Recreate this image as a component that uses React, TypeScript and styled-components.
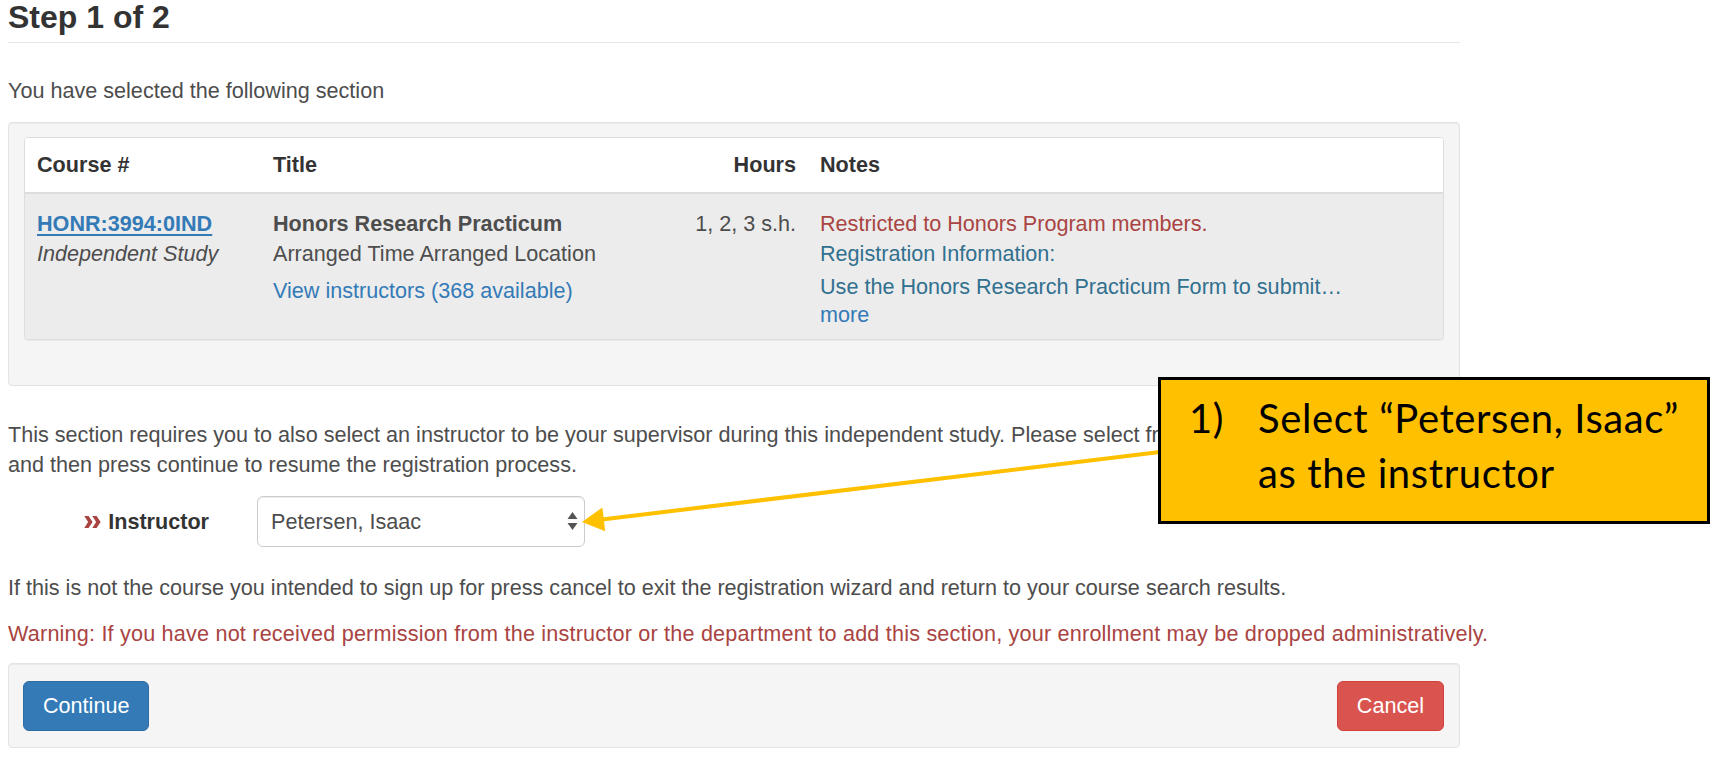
import * as React from 'react';
import styled, { createGlobalStyle } from 'styled-components';

const GlobalStyle = createGlobalStyle`
  html, body {
    margin: 0;
    padding: 0;
    background: #fff;
  }
  body {
    font-family: 'Liberation Sans', Arial, Helvetica, sans-serif;
    font-size: 21.6px;
    line-height: 30px;
    color: #4d4d4d;
  }
`;

const Page = styled.div`
  position: relative;
  width: 1452px;
  height: 757px;
  padding-left: 8px;
`;

const PageHeader = styled.h2`
  margin: 0;
  padding-bottom: 7px;
  font-size: 32px;
  line-height: 35px;
  font-weight: bold;
  color: #333;
  border-bottom: 1px solid #e6e6e6;
`;

const Text = styled.p<{ $top: number; $tone?: 'danger' }>`
  margin: ${({ $top }) => $top}px 0 0;
  color: ${({ $tone }) => ($tone === 'danger' ? '#a94442' : '#4d4d4d')};
  letter-spacing: ${({ $tone }) => ($tone === 'danger' ? '0.2px' : 'normal')};
  white-space: ${({ $tone }) => ($tone === 'danger' ? 'nowrap' : 'normal')};
`;

const Well = styled.div<{ $top: number }>`
  margin-top: ${({ $top }) => $top}px;
  background: #f5f5f5;
  border: 1px solid #e3e3e3;
  border-radius: 4px;
  box-shadow: inset 0 1px 1px rgba(0, 0, 0, 0.05);
`;

const SectionWell = styled(Well)`
  padding: 14px 15px 15px;
`;

const Panel = styled.div`
  margin-bottom: 30px;
  border: 1px solid #ddd;
  border-radius: 4px;
  overflow: hidden;
  box-shadow: 0 1px 1px rgba(0, 0, 0, 0.05);
`;

const Row = styled.div<{ $head?: boolean }>`
  display: grid;
  grid-template-columns: 236px 422px 125px 1fr;
  background: ${({ $head }) => ($head ? '#fff' : '#ececec')};
  border-bottom: ${({ $head }) => ($head ? '2px solid #ddd' : 'none')};
`;

const Cell = styled.div<{ $head?: boolean; $right?: boolean }>`
  padding: ${({ $head }) => ($head ? '12px' : '15px 12px 12px')};
  text-align: ${({ $right }) => ($right ? 'right' : 'left')};
  font-weight: ${({ $head }) => ($head ? 'bold' : 'normal')};
  color: ${({ $head }) => ($head ? '#333' : '#4d4d4d')};
`;

const Line = styled.div<{ $tone?: 'link' | 'danger' | 'info'; $bold?: boolean; $italic?: boolean; $gap?: number; $lh?: number }>`
  margin-top: ${({ $gap }) => $gap ?? 0}px;
  line-height: ${({ $lh }) => $lh ?? 30}px;
  font-weight: ${({ $bold }) => ($bold ? 'bold' : 'normal')};
  font-style: ${({ $italic }) => ($italic ? 'italic' : 'normal')};
  color: ${({ $tone }) =>
    $tone === 'link' ? '#337ab7' : $tone === 'danger' ? '#a94442' : $tone === 'info' ? '#31708f' : 'inherit'};
`;

const CourseLink = styled.a`
  color: #337ab7;
  font-weight: bold;
  text-decoration: underline;
  text-underline-offset: 3px;
`;

const FieldRow = styled.div`
  display: flex;
  align-items: center;
  margin-top: 16px;
`;

const FieldLabel = styled.label`
  width: 201px;
  display: flex;
  justify-content: flex-end;
  align-items: center;
  gap: 7px;
  font-weight: bold;
  color: #333;
`;

const SelectBox = styled.div`
  box-sizing: border-box;
  margin-left: 48px;
  width: 328px;
  height: 51px;
  padding: 0 6px 0 13px;
  display: flex;
  align-items: center;
  justify-content: space-between;
  background: #fff;
  border: 1px solid #ccc;
  border-radius: 6px;
  box-shadow: inset 0 1px 1px rgba(0, 0, 0, 0.075);
  color: #4d4d4d;
`;

const ButtonBar = styled(Well)`
  height: 83px;
  padding: 0 15px 0 14px;
  display: flex;
  align-items: center;
  justify-content: space-between;
`;

const Button = styled.button<{ $variant: 'primary' | 'danger' }>`
  height: 50px;
  padding: 0 19px;
  font-family: inherit;
  font-size: 21.6px;
  line-height: 30px;
  color: #fff;
  border-radius: 6px;
  border: 1px solid ${({ $variant }) => ($variant === 'primary' ? '#2e6da4' : '#d43f3a')};
  background: ${({ $variant }) => ($variant === 'primary' ? '#337ab7' : '#d9534f')};
`;

const Callout = styled.div`
  position: absolute;
  left: 1158px;
  top: 377px;
  box-sizing: border-box;
  width: 552px;
  height: 147px;
  padding: 11px 0 0 28px;
  display: grid;
  grid-template-columns: 69px 1fr;
  background: #ffc000;
  border: 3px solid #000;
  font-family: Lato, 'Open Sans', sans-serif;
  font-size: 40px;
  letter-spacing: 0.6px;
  line-height: 55px;
  color: #000;
`;

const Overlay = styled.svg`
  position: absolute;
  left: 0;
  top: 0;
  pointer-events: none;
`;

const Chevrons = () => (
  <svg width="17" height="12" viewBox="0 0 17 12">
    <polygon points="0.3,0 4.6,0 8.6,6 4.6,12 0.3,12 4.1,6" fill="#a94442" />
    <polygon points="8.3,0 12.6,0 16.6,6 12.6,12 8.3,12 12.1,6" fill="#a94442" />
  </svg>
);

const UpDown = () => (
  <svg width="11" height="19" viewBox="0 0 11 19">
    <polygon points="5.5,0 10.5,7 0.5,7" fill="#555" />
    <polygon points="0.5,11 10.5,11 5.5,18" fill="#555" />
  </svg>
);

export default function App() {
  return (
    <>
      <GlobalStyle />
      <Page>
        <PageHeader>Step 1 of 2</PageHeader>
        <Text $top={33}>You have selected the following section</Text>

        <SectionWell $top={16}>
          <Panel>
            <Row $head>
              <Cell $head>Course #</Cell>
              <Cell $head>Title</Cell>
              <Cell $head $right>Hours</Cell>
              <Cell $head>Notes</Cell>
            </Row>
            <Row>
              <Cell>
                <Line><CourseLink href="#">HONR:3994:0IND</CourseLink></Line>
                <Line $italic>Independent Study</Line>
              </Cell>
              <Cell>
                <Line $bold>Honors Research Practicum</Line>
                <Line>Arranged Time Arranged Location</Line>
                <Line $tone="link" $gap={7}>View instructors (368 available)</Line>
              </Cell>
              <Cell $right>
                <Line>1, 2, 3 s.h.</Line>
              </Cell>
              <Cell>
                <Line $tone="danger">Restricted to Honors Program members.</Line>
                <Line $tone="info">Registration Information:</Line>
                <Line $tone="info" $gap={3}>Use the Honors Research Practicum Form to submit…</Line>
                <Line $tone="link" $lh={25}>more</Line>
              </Cell>
            </Row>
          </Panel>
        </SectionWell>

        <Text $top={34}>
          This section requires you to also select an instructor to be your supervisor during this
          independent study. Please select from the list below
          <br />
          and then press continue to resume the registration process.
        </Text>

        <FieldRow>
          <FieldLabel>
            <Chevrons />
            Instructor
          </FieldLabel>
          <SelectBox>
            <span>Petersen, Isaac</span>
            <UpDown />
          </SelectBox>
        </FieldRow>

        <Text $top={26}>
          If this is not the course you intended to sign up for press cancel to exit the registration
          wizard and return to your course search results.
        </Text>
        <Text $top={16} $tone="danger">
          Warning: If you have not received permission from the instructor or the department to add
          this section, your enrollment may be dropped administratively.
        </Text>

        <ButtonBar $top={14}>
          <Button $variant="primary">Continue</Button>
          <Button $variant="danger">Cancel</Button>
        </ButtonBar>

        <Overlay width="1719" height="757" viewBox="0 0 1719 757">
          <line x1="1160" y1="452" x2="600" y2="519.7" stroke="#ffc000" strokeWidth="4" />
          <polygon points="582,522 605.2,531.2 602.4,507.4" fill="#ffc000" />
        </Overlay>

        <Callout>
          <span>1)</span>
          <span>
            Select “Petersen, Isaac”
            <br />
            as the instructor
          </span>
        </Callout>
      </Page>
    </>
  );
}
